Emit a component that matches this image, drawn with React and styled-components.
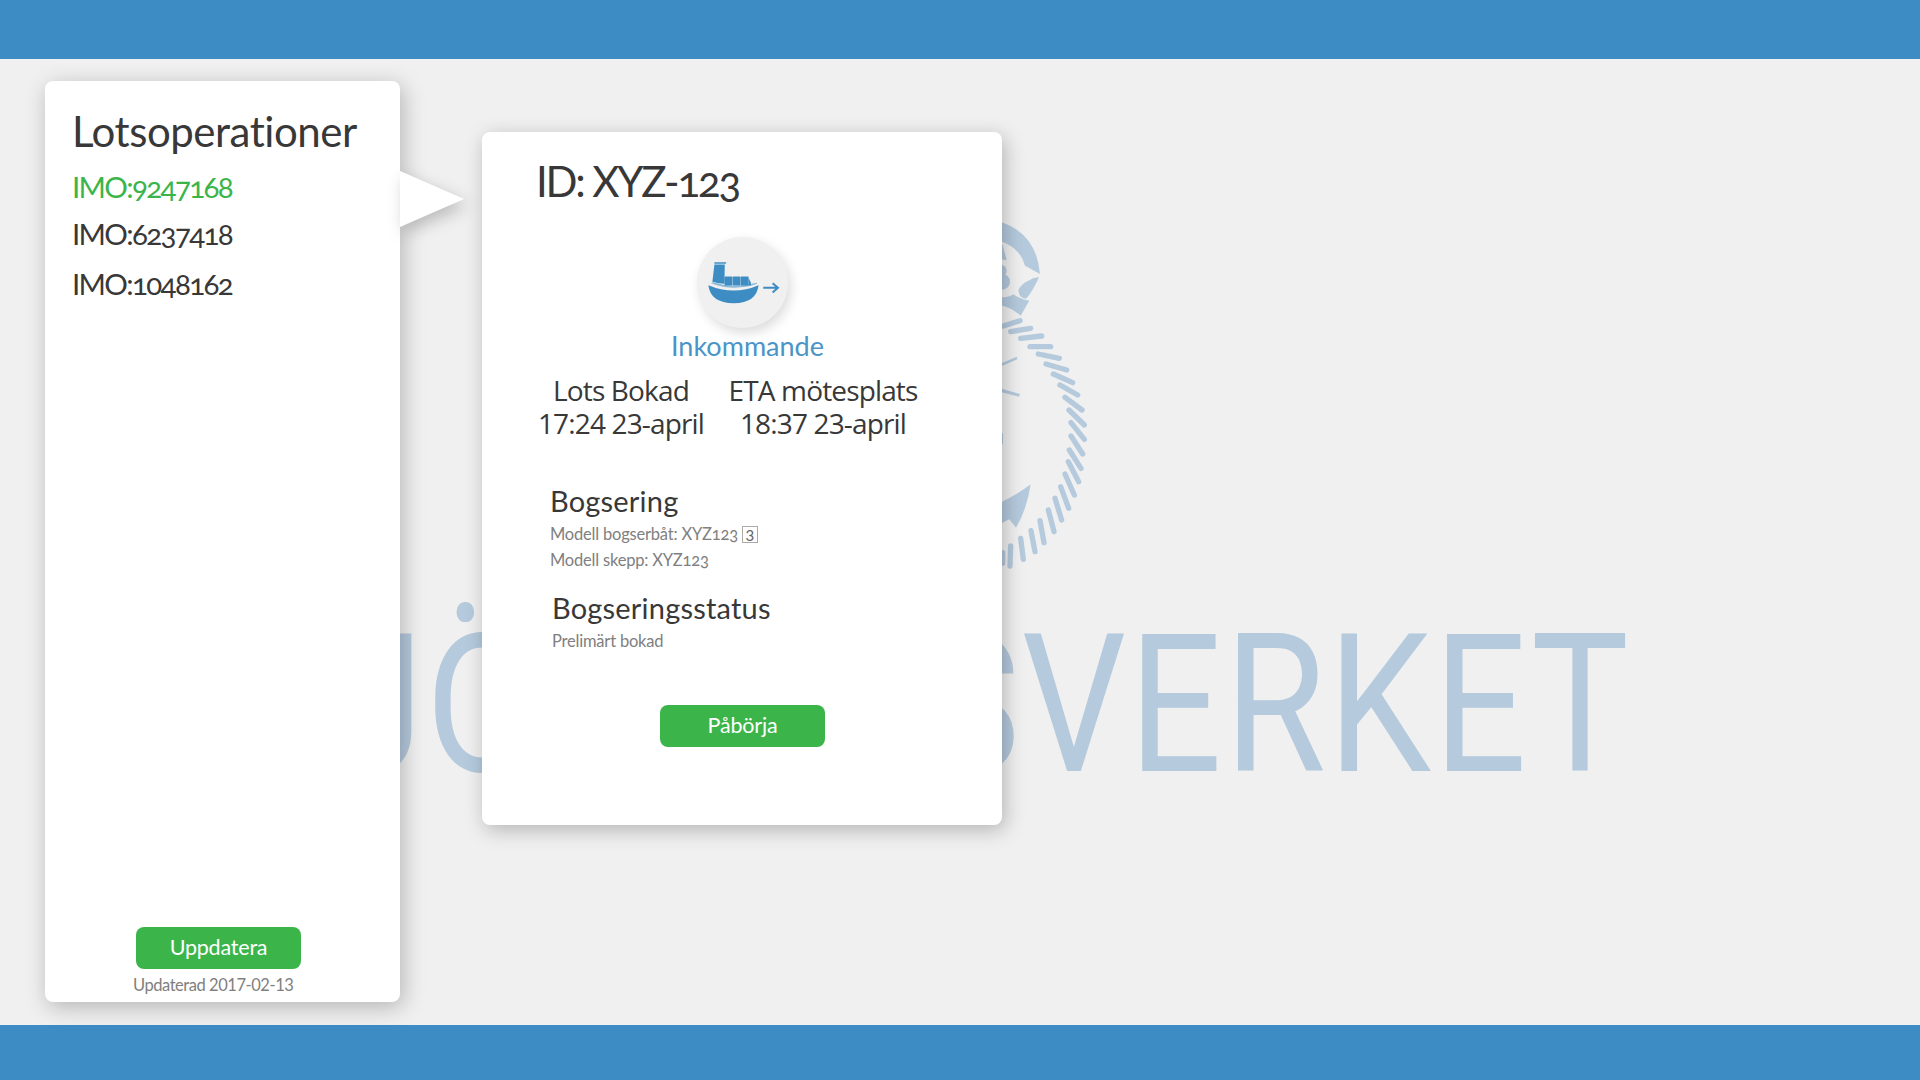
import React from "react";
import styled, { createGlobalStyle } from "styled-components";

const Global = createGlobalStyle`
  html, body { margin: 0; padding: 0; background: #f0f0f0; }
  * { box-sizing: border-box; }
  body { font-family: Lato, "Open Sans", sans-serif; color: #333; }
`;

const GREEN = "#3bb54a";
const BLUE = "#3d8dc4";
const MARK = "#b5cadd";

const Page = styled.div`
  width: 1920px;
  height: 1080px;
  display: flex;
  flex-direction: column;
  overflow: hidden;
  background: #f0f0f0;
`;
const Bar = styled.div`
  flex: 0 0 ${(p) => p.$h}px;
  background: #3d8cc4;
`;
const Main = styled.main`
  flex: 1;
  position: relative;
  display: flex;
  align-items: flex-start;
  gap: 82px;
  padding: 22px 0 0 45px;
`;
const Wordmark = styled.div`
  position: absolute;
  top: 515px;
  right: 289px;
  font: 400 193px/1.36 Roboto, sans-serif;
  letter-spacing: 3px;
  color: ${MARK};
  white-space: nowrap;
  transform: scaleX(0.85);
  transform-origin: right center;
`;
const WordmarkHead = styled.span`
  letter-spacing: 2px;
`;
const Emblem = styled.svg`
  position: absolute;
  left: 980px;
  top: 141px;
  width: 130px;
  height: 380px;
`;
const Panel = styled.aside`
  position: relative;
  width: 355px;
  height: 921px;
  padding: 25px 0 0 27px;
  display: flex;
  flex-direction: column;
  background: #fff;
  border-radius: 8px;
  box-shadow: 3px 5px 22px rgba(0, 0, 0, 0.25);
`;
const Pointer = styled.div`
  position: absolute;
  left: 355px;
  top: 90px;
  width: 64px;
  height: 56px;
  background: #fff;
  clip-path: polygon(0 0, 100% 50%, 0 100%);
`;
const PointerShadow = styled.div`
  position: absolute;
  left: 0;
  top: 0;
  filter: drop-shadow(4px 6px 8px rgba(0, 0, 0, 0.22));
`;
const Title = styled.h1`
  margin: 0 0 9px;
  font-size: 42px;
  line-height: 50px;
  font-weight: 400;
  letter-spacing: -0.45px;
  color: #383838;
`;
const Imo = styled.div`
  height: ${(p) => p.$h}px;
  font-size: 29.5px;
  line-height: 44px;
  letter-spacing: -1.65px;
  font-variant-numeric: oldstyle-nums;
  color: ${(p) => (p.$active ? GREEN : "#383838")};
`;
const Footer = styled.div`
  margin-top: auto;
  padding-bottom: 5px;
  display: flex;
  flex-direction: column;
  align-items: flex-start;
`;
const Button = styled.button`
  width: 165px;
  height: 42px;
  padding: 0 0 2px;
  border: 0;
  border-radius: 8px;
  background: ${GREEN};
  color: #fff;
  font: 400 21.5px Lato, sans-serif;
  letter-spacing: -0.2px;
`;
const UpdateButton = styled(Button)`
  margin-left: 64px;
`;
const Updated = styled.div`
  margin: 4px 0 0 61px;
  font-size: 16.5px;
  line-height: 24px;
  letter-spacing: -0.45px;
  color: #808080;
`;
const Card = styled.section`
  position: relative;
  width: 520px;
  height: 693px;
  margin-top: 51px;
  padding-top: 24px;
  display: flex;
  flex-direction: column;
  background: #fff;
  border-radius: 8px;
  box-shadow: 3px 5px 20px rgba(0, 0, 0, 0.25);
`;
const CardId = styled.h2`
  margin: 0 0 0 54px;
  font-size: 42px;
  line-height: 50px;
  font-weight: 400;
  letter-spacing: -2.2px;
  font-variant-numeric: oldstyle-nums;
  color: #383838;
`;
const Badge = styled.div`
  width: 91px;
  height: 91px;
  margin: 31px 0 0 215px;
  border-radius: 50%;
  background: #f0f0f0;
  box-shadow: 3px 5px 12px rgba(0, 0, 0, 0.14);
`;
const Direction = styled.div`
  margin: 1px 0 0 189px;
  font-size: 27px;
  line-height: 34px;
  font-weight: 400;
  color: #4a94c8;
`;
const Times = styled.div`
  margin: 11px 0 0 44px;
  display: flex;
  gap: 12px;
`;
const TimeCol = styled.div`
  width: 190px;
  flex: none;
  white-space: nowrap;
  text-align: center;
  font: 400 28px/33px "Open Sans", sans-serif;
  letter-spacing: -0.85px;
  color: #383838;
`;
const Section = styled.div`
  margin: ${(p) => p.$top}px 0 0 ${(p) => p.$left}px;
`;
const SectionTitle = styled.h3`
  margin: 0 0 2px;
  font-size: 29px;
  line-height: 36px;
  font-weight: 400;
  letter-spacing: 0.2px;
  color: #383838;
`;
const Detail = styled.div`
  display: flex;
  align-items: center;
  gap: 4px;
  font-size: 16.5px;
  line-height: 26px;
  letter-spacing: -0.2px;
  color: #808080;
  font-variant-numeric: oldstyle-nums;
`;
const Count = styled.span`
  width: 16px;
  height: 17px;
  border: 1px solid #aaa;
  text-align: center;
  font-size: 15px;
  line-height: 16px;
  font-variant-numeric: lining-nums;
  color: #666;
`;
const StartButton = styled(Button)`
  margin: 51px 0 0 178px;
`;

const strands = [
  [70, 378, 120, 362], [92, 395, 152, 385], [122, 415, 185, 408],
  [150, 440, 212, 440], [175, 462, 238, 475], [198, 492, 260, 510], [220, 522, 278, 548],
  [240, 555, 293, 585], [255, 592, 306, 630], [267, 630, 313, 675], [273, 668, 313, 718],
  [273, 708, 308, 762], [268, 750, 303, 805], [265, 785, 296, 845], [255, 822, 283, 885],
  [242, 860, 266, 925], [225, 895, 245, 960], [205, 930, 222, 995], [180, 962, 192, 1028],
  [153, 992, 165, 1055], [122, 1015, 130, 1078], [92, 1038, 90, 1098], [68, 1058, 68, 1090],
];

const EmblemArt = () => (
  <Emblem viewBox="0 0 390 1140" fill={MARK}>
    <path d="M60 65 Q170 100 180 222 L135 197 Q122 145 60 122 Z" />
    <path d="M60 130 L68 135 L80 180 L60 178 Z" />
    <circle cx="62" cy="212" r="18" />
    <circle cx="66" cy="245" r="24" />
    <path d="M177 232 Q160 232 150 240 Q125 250 115 270 Q118 298 140 295 Q160 270 177 232 Z" />
    <path d="M60 290 Q85 296 100 283 Q120 298 148 302 L122 347 Q90 320 60 316 Z" />
    {strands.map(([a, b, c, d]) => (
      <line key={`${a}-${b}`} x1={a} y1={b} x2={c} y2={d} stroke={MARK} strokeWidth="16" strokeLinecap="round" />
    ))}
    <path d="M60 492 L110 470 L112 478 L60 500 Z" />
    <path d="M60 565 L120 582 L117 590 L60 575 Z" />
    <rect x="60" y="700" width="9" height="33" />
    <path d="M60 908 Q110 885 152 853 Q142 925 108 983 L88 958 L60 972 Z" />
  </Emblem>
);

const ShipIcon = () => (
  <svg viewBox="20 20 272 272" width="91" height="91" fill={BLUE}>
    <path d="M54 164 Q130 196 204 164 Q198 217 130 218 Q60 217 54 164 Z" />
    <path d="M62 158 L66 155 Q130 175 198 157 L200 160 Q130 184 62 158 Z" opacity="0.55" />
    <path d="M72 102 L103 102 L102 160 Q84 160 66 154 Z" />
    <path d="M72 95 L108 95 L106 101 L72 101 Z" opacity="0.75" />
    <rect x="102" y="138" width="24" height="27" rx="2" />
    <rect x="127" y="138" width="22" height="27" rx="2" />
    <rect x="150" y="138" width="24" height="27" rx="2" />
    <path d="M174 142 L181 156 L181 165 L174 165 Z" />
    <path d="M218 172 H260 M246 158 L262 172 L246 186" fill="none" stroke={BLUE} strokeWidth="6" />
  </svg>
);

export default function App() {
  return (
    <Page>
      <Global />
      <Bar $h={59} />
      <Main>
        <Wordmark><WordmarkHead>SJÖFARTS</WordmarkHead>VERKET</Wordmark>
        <EmblemArt />
        <Panel>
          <PointerShadow><Pointer /></PointerShadow>
          <Title>Lotsoperationer</Title>
          <Imo $active $h={47}>IMO:9247168</Imo>
          <Imo $h={50}>IMO:6237418</Imo>
          <Imo $h={50}>IMO:1048162</Imo>
          <Footer>
            <UpdateButton>Uppdatera</UpdateButton>
            <Updated>Updaterad 2017-02-13</Updated>
          </Footer>
        </Panel>
        <Card>
          <CardId>ID: XYZ-123</CardId>
          <Badge><ShipIcon /></Badge>
          <Direction>Inkommande</Direction>
          <Times>
            <TimeCol>Lots Bokad<br />17:24 23-april</TimeCol>
            <TimeCol>ETA mötesplats<br />18:37 23-april</TimeCol>
          </Times>
          <Section $top={43} $left={68}>
            <SectionTitle>Bogsering</SectionTitle>
            <Detail>Modell bogserbåt: XYZ123 <Count>3</Count></Detail>
            <Detail>Modell skepp: XYZ123</Detail>
          </Section>
          <Section $top={17} $left={70}>
            <SectionTitle>Bogseringsstatus</SectionTitle>
            <Detail>Prelimärt bokad</Detail>
          </Section>
          <StartButton>Påbörja</StartButton>
        </Card>
      </Main>
      <Bar $h={55} />
    </Page>
  );
}
